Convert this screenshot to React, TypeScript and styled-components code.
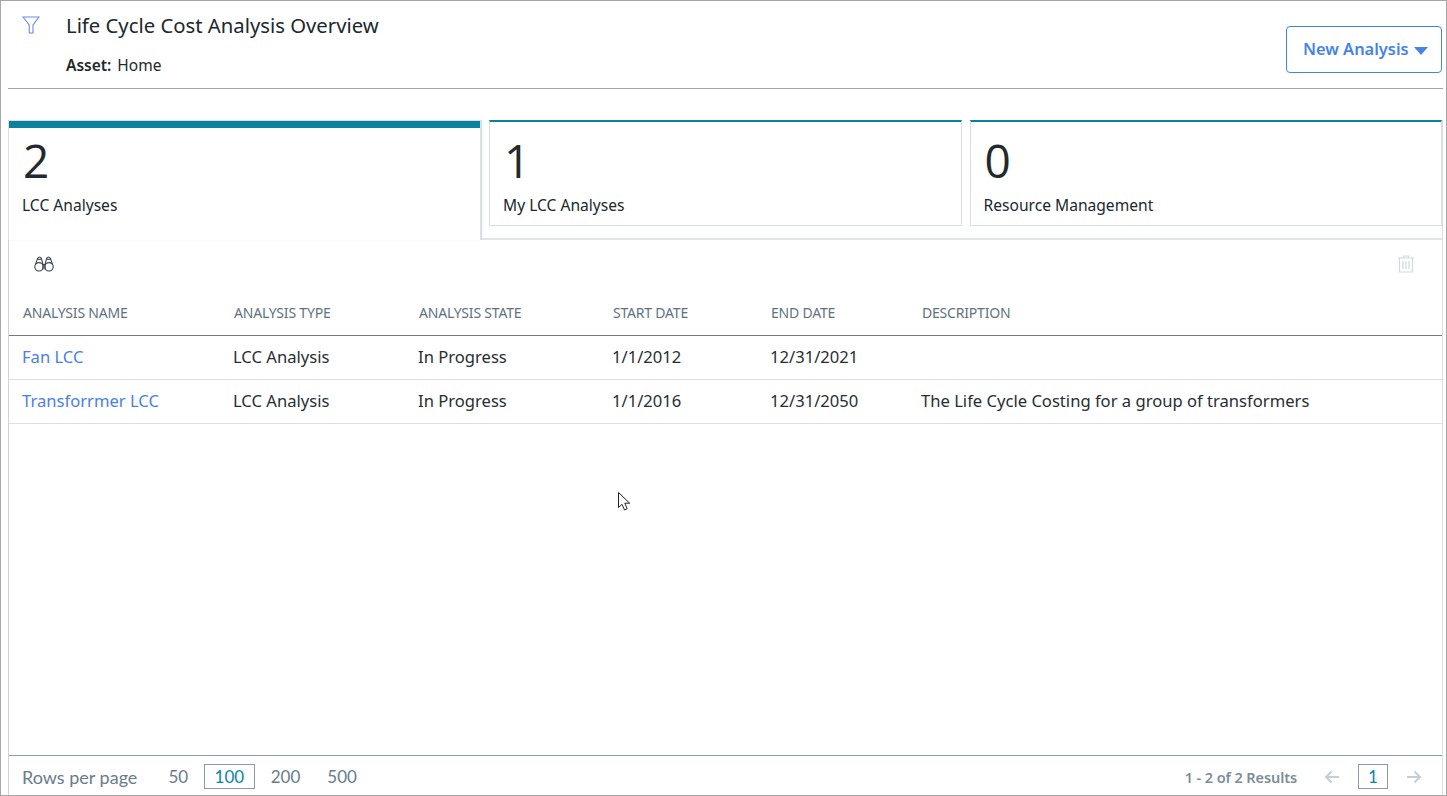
import React from "react";
import styled, { createGlobalStyle } from "styled-components";

const Global = createGlobalStyle`
  html, body { margin: 0; padding: 0; background: #fff; }
  body { font-family: "Noto Sans", "Open Sans", sans-serif; color: #20282d; }
  * { box-sizing: border-box; }
`;

const Frame = styled.div`
  position: relative;
  width: 1447px;
  height: 796px;
  border: 1px solid #a6a6a6;
  padding: 0 3px 0 7px;
  display: flex;
  flex-direction: column;
  overflow: hidden;
`;

const Header = styled.header`
  height: 88px;
  flex: none;
  border-bottom: 1px solid #a3a3a3;
  display: flex;
  justify-content: space-between;
`;

const HeaderLeft = styled.div`
  display: flex;
  padding-left: 14px;
`;

const FilterSlot = styled.div`
  width: 44px;
  padding-top: 15px;
  line-height: 0;
`;

const Titles = styled.div`
  padding-top: 11px;
`;

const Title = styled.h1`
  margin: 0;
  font-size: 20.3px;
  line-height: 27px;
  font-weight: 400;
`;

const AssetLine = styled.div`
  margin-top: 15px;
  font-size: 15.5px;
  line-height: 22px;
  display: flex;
  gap: 6px;
`;

const AssetLabel = styled.strong`
  font-weight: 600;
`;

const NewButton = styled.button`
  align-self: flex-start;
  margin: 25px 1px 0 0;
  width: 156px;
  height: 47px;
  padding: 0 0 2px 16px;
  border: 1px solid #3f86ea;
  border-radius: 4px;
  background: #fff;
  color: #4583e6;
  font: 600 16.4px "Noto Sans", sans-serif;
  display: flex;
  align-items: center;
  gap: 5px;
`;

const Caret = styled.span`
  width: 0;
  height: 0;
  margin-top: 5px;
  border-left: 7.5px solid transparent;
  border-right: 7.5px solid transparent;
  border-top: 8px solid #4583e6;
`;

const TabStrip = styled.div`
  margin-top: 31px;
  height: 120px;
  flex: none;
  display: flex;
`;

const ActiveTab = styled.div`
  width: 474px;
  flex: none;
  border: 1px solid #dcdfe1;
  border-bottom: none;
  border-right-width: 2px;
  background: #fff;
  box-shadow: 1px 0 2px rgba(0, 0, 0, 0.05);
`;

const ActiveBar = styled.div`
  height: 7px;
  background: #0b819d;
`;

const RestTabs = styled.div`
  flex: 1;
  padding-left: 7px;
  display: flex;
  gap: 8px;
  align-items: flex-start;
  border-bottom: 2px solid #e2e4e6;
  border-right: 1px solid #dcdfe1;
`;

const Tab = styled.div`
  flex: 1;
  height: 106px;
  border: 1px solid #dcdfe1;
  border-top: 2px solid #0b819d;
  background: #fff;
`;

const TabBody = styled.div<{ $active?: boolean }>`
  padding: ${(p) => (p.$active ? "5px" : "11px")} 0 0 14px;
`;

const Count = styled.div`
  font-size: 46px;
  line-height: 54px;
  font-weight: 400;
  color: #23292d;
  font-family: "Open Sans", sans-serif;
`;

const TabLabel = styled.div`
  margin: 7px 0 0 -1px;
  font-size: 15.6px;
  line-height: 22px;
`;

const Panel = styled.main`
  flex: 1;
  min-height: 0;
  display: flex;
  flex-direction: column;
  border-left: 1px solid #cfd3d6;
  border-right: 1px solid #dcdfe1;
`;

const Toolbar = styled.div`
  height: 50px;
  flex: none;
  display: flex;
  justify-content: space-between;
  align-items: center;
  padding: 0 28px 2px 25px;
`;

const ToolIcon = styled.span`
  line-height: 0;
`;

const TableArea = styled.div`
  flex: 1;
`;

const Table = styled.table`
  width: 100%;
  border-collapse: collapse;
  table-layout: fixed;
`;

const Th = styled.th<{ $w?: number }>`
  width: ${(p) => (p.$w ? `${p.$w}px` : "auto")};
  height: 45px;
  padding: 0 0 0 14px;
  text-align: left;
  text-transform: uppercase;
  font-size: 14px;
  font-weight: 400;
  color: #5e7280;
  letter-spacing: -0.2px;
  border-bottom: 1px solid #6f7a82;
`;

const Td = styled.td`
  height: 44px;
  padding: 0 0 2px 13px;
  font-size: 16.6px;
  color: #272e33;
  border-bottom: 1px solid #dde0e3;
`;

const RowLink = styled.a`
  color: #4a7fe6;
  text-decoration: none;
`;

const Footer = styled.footer`
  height: 40px;
  flex: none;
  border-top: 1px solid #8c9aa4;
  display: flex;
  justify-content: space-between;
  align-items: center;
  padding: 2px 20px 0 13px;
  font-family: Lato, sans-serif;
  color: #687c89;
`;

const PageSizes = styled.div`
  display: flex;
  align-items: center;
  font-size: 17px;
`;

const RowsLabel = styled.span`
  margin-right: 20px;
  font-size: 18px;
`;

const PageBox = styled.span<{ $active?: boolean }>`
  height: 25px;
  padding: 0 ${(p) => (p.$active ? "9.5px" : "10px")};
  display: flex;
  align-items: center;
  border: 1px solid ${(p) => (p.$active ? "#8c9aa4" : "transparent")};
  color: ${(p) => (p.$active ? "#0a84a8" : "#687c89")};
  margin-right: 5px;
`;

const Pager = styled.div`
  display: flex;
  align-items: center;
`;

const Results = styled.span`
  font: 600 14.5px "Noto Sans", sans-serif;
  letter-spacing: -0.1px;
  color: #7d8d98;
  margin-right: 27px;
`;

const CurrentPage = styled.span`
  width: 30px;
  height: 25px;
  margin: 0 18px 0 18px;
  display: flex;
  align-items: center;
  justify-content: center;
  border: 1px solid #8c9aa4;
  color: #0a84a8;
  font-size: 17px;
`;

const CursorMark = styled.svg`
  position: absolute;
  left: 615px;
  top: 489px;
`;

const columns = [
  ["Analysis Name", 211],
  ["Analysis Type", 185],
  ["Analysis State", 194],
  ["Start Date", 158],
  ["End Date", 151],
  ["Description", 0],
] as const;

const rows = [
  ["Fan LCC", "LCC Analysis", "In Progress", "1/1/2012", "12/31/2021", ""],
  ["Transforrmer LCC", "LCC Analysis", "In Progress", "1/1/2016", "12/31/2050", "The Life Cycle Costing for a group of transformers"],
];

const Arrow = ({ left }: { left?: boolean }) => (
  <svg width="16" height="14" viewBox="0 0 16 14" fill="none" stroke="#c3ced6" strokeWidth="2">
    {left ? <path d="M15 7H2M7.5 1.5 2 7l5.5 5.5" /> : <path d="M1 7h13M8.5 1.5 14 7l-5.5 5.5" />}
  </svg>
);

export default function App() {
  return (
    <>
      <Global />
      <Frame>
        <Header>
          <HeaderLeft>
            <FilterSlot>
              <svg width="18" height="18" viewBox="0 0 18 18" fill="none" stroke="#6e86ee" strokeWidth="1.1">
                <path d="M1 1h16l-6 8v8H7.2V9z" />
              </svg>
            </FilterSlot>
            <Titles>
              <Title>Life Cycle Cost Analysis Overview</Title>
              <AssetLine>
                <AssetLabel>Asset:</AssetLabel>
                <span>Home</span>
              </AssetLine>
            </Titles>
          </HeaderLeft>
          <NewButton>
            New Analysis
            <Caret />
          </NewButton>
        </Header>

        <TabStrip>
          <ActiveTab>
            <ActiveBar />
            <TabBody $active>
              <Count>2</Count>
              <TabLabel>LCC Analyses</TabLabel>
            </TabBody>
          </ActiveTab>
          <RestTabs>
            <Tab>
              <TabBody>
                <Count>1</Count>
                <TabLabel>My LCC Analyses</TabLabel>
              </TabBody>
            </Tab>
            <Tab>
              <TabBody>
                <Count>0</Count>
                <TabLabel>Resource Management</TabLabel>
              </TabBody>
            </Tab>
          </RestTabs>
        </TabStrip>

        <Panel>
          <Toolbar>
            <ToolIcon>
              <svg width="20" height="16" viewBox="0 0 20 16" fill="none" stroke="#39424a" strokeWidth="1.1">
                <circle cx="5" cy="10.8" r="4.2" />
                <circle cx="15" cy="10.8" r="4.2" />
                <path d="M1.5 8.5 3.6 2.4Q5.5-.4 7.4 2.4L9 8.5v5M18.5 8.5 16.4 2.4Q14.5-.4 12.6 2.4L11 8.5v5M3.6 3.2h3.8M12.6 3.2h3.8M9 8.5h2" />
              </svg>
            </ToolIcon>
            <ToolIcon>
              <svg width="16" height="18" viewBox="0 0 16 18" fill="none" stroke="#d4d9dd" strokeWidth="1.2">
                <path d="M0 3h16M5.5 3V1h5v2M1.5 3v14h13V3M5 6v8M8 6v8M11 6v8" />
              </svg>
            </ToolIcon>
          </Toolbar>
          <TableArea>
            <Table>
              <thead>
                <tr>
                  {columns.map(([name, w]) => (
                    <Th key={name} $w={w}>{name}</Th>
                  ))}
                </tr>
              </thead>
              <tbody>
                {rows.map((r) => (
                  <tr key={r[0]}>
                    {r.map((c, i) => (
                      <Td key={i}>{i === 0 ? <RowLink>{c}</RowLink> : c}</Td>
                    ))}
                  </tr>
                ))}
              </tbody>
            </Table>
          </TableArea>
          <Footer>
            <PageSizes>
              <RowsLabel>Rows per page</RowsLabel>
              <PageBox>50</PageBox>
              <PageBox $active>100</PageBox>
              <PageBox>200</PageBox>
              <PageBox>500</PageBox>
            </PageSizes>
            <Pager>
              <Results>1 - 2 of 2 Results</Results>
              <Arrow left />
              <CurrentPage>1</CurrentPage>
              <Arrow />
            </Pager>
          </Footer>
        </Panel>
        <CursorMark width="16" height="22" viewBox="0 0 16 22" fill="#fff" stroke="#222" strokeWidth="1">
          <path d="M2.5 2.5v15l3.5-3.2 2.5 5.7 2.7-1.2-2.4-5.6h4.9z" />
        </CursorMark>
      </Frame>
    </>
  );
}
